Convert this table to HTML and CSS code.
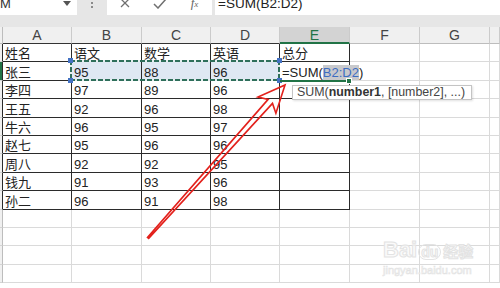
FILE: index.html
```html
<!DOCTYPE html>
<html lang="zh">
<head>
<meta charset="utf-8">
<title>Excel SUM</title>
<link rel="stylesheet" href="styles.css">
</head>
<body>
<div class="topbar">
  <div class="namebox"><span class="fn">SUM</span><span class="caret"></span></div>
  <div class="dots"><span></span><span></span></div>
  <div class="iconbox">
    <span class="slot"><svg width="10" height="10" viewBox="0 0 10 10"><path d="M1 1L9 9M9 1L1 9" stroke="#707070" stroke-width="1.3" fill="none"/></svg></span>
    <span class="slot"><svg width="14" height="11" viewBox="0 0 14 11"><path d="M1 6L5 10L13 1" stroke="#707070" stroke-width="1.5" fill="none"/></svg></span>
    <span class="slot"><span class="fx">f<span class="x">x</span></span></span>
  </div>
  <div class="formula">=SUM(B2:D2)</div>
</div>

<div class="sheet">
  <div class="corner"></div>
  <div class="ch k">A</div><div class="ch k">B</div><div class="ch k">C</div><div class="ch k">D</div><div class="ch k on">E</div><div class="ch">F</div><div class="ch">G</div><div class="ch"></div>

  <div class="rh k"></div>
  <div class="c k">姓名</div><div class="c k">语文</div><div class="c k">数学</div><div class="c k">英语</div><div class="c k">总分</div><div class="c"></div><div class="c"></div><div class="c"></div>

  <div class="rh k on"></div>
  <div class="c k">张三</div><div class="c k sel first">95<div class="marq"><span class="h tl"></span><span class="h tr"></span><span class="h bl"></span><span class="h br"></span></div></div><div class="c k sel">88</div><div class="c k sel">96</div><div class="c k act">=SUM(<span class="ref">B2:D2</span>)</div><div class="c"></div><div class="c"></div><div class="c"></div>

  <div class="rh k"></div>
  <div class="c k">李四</div><div class="c k">97</div><div class="c k">89</div><div class="c k">96</div><div class="c k"></div><div class="c"></div><div class="c"></div><div class="c"></div>

  <div class="rh k"></div>
  <div class="c k">王五</div><div class="c k">92</div><div class="c k">96</div><div class="c k">98</div><div class="c k"></div><div class="c"></div><div class="c"></div><div class="c"></div>

  <div class="rh k"></div>
  <div class="c k">牛六</div><div class="c k">96</div><div class="c k">95</div><div class="c k">97</div><div class="c k"></div><div class="c"></div><div class="c"></div><div class="c"></div>

  <div class="rh k"></div>
  <div class="c k">赵七</div><div class="c k">95</div><div class="c k">96</div><div class="c k">96</div><div class="c k"></div><div class="c"></div><div class="c"></div><div class="c"></div>

  <div class="rh k"></div>
  <div class="c k">周八</div><div class="c k">92</div><div class="c k">92</div><div class="c k">95</div><div class="c k"></div><div class="c"></div><div class="c"></div><div class="c"></div>

  <div class="rh k"></div>
  <div class="c k">钱九</div><div class="c k">91</div><div class="c k">93</div><div class="c k">96</div><div class="c k"></div><div class="c"></div><div class="c"></div><div class="c"></div>

  <div class="rh k"></div>
  <div class="c k">孙二</div><div class="c k">96</div><div class="c k">91</div><div class="c k">98</div><div class="c k"></div><div class="c"></div><div class="c"></div><div class="c"></div>

  <div class="rh"></div>
  <div class="c"></div><div class="c"></div><div class="c"></div><div class="c"></div><div class="c"></div><div class="c"></div><div class="c"></div><div class="c"></div>
  <div class="rh"></div>
  <div class="c"></div><div class="c"></div><div class="c"></div><div class="c"></div><div class="c"></div><div class="c"></div><div class="c"></div><div class="c"></div>
  <div class="rh"></div>
  <div class="c"></div><div class="c"></div><div class="c"></div><div class="c"></div><div class="c"></div><div class="c"></div><div class="c"></div><div class="c"></div>
  <div class="rh"></div>
  <div class="c"></div><div class="c"></div><div class="c"></div><div class="c"></div><div class="c"></div><div class="c"></div><div class="c"></div><div class="c"></div>
</div>

<div class="tip">SUM(<b>number1</b>, [number2], ...)</div>

<svg class="arrow" width="500" height="288" viewBox="0 0 500 288">
  <polygon points="285,85 275.9,113.2 272.5,103.4 148.7,238.4 147.5,237.4 268.1,99.4 258,97.1" fill="none" stroke="#e3211c" stroke-width="1.6" stroke-linejoin="miter"/>
</svg>

<div class="watermark">
  <div class="wm-logo"><span class="wm-bai">Bai</span><span class="wm-du">du</span><span class="wm-jy">经验</span></div>
  <div class="wm-url">jingyan.baidu.com</div>
</div>
</body>
</html>
```

FILE: styles.css
```css
html, body {
  margin: 0;
  height: 100%;
  overflow: hidden;
  background: #fff;
}
body {
  position: relative;
  font-family: "Liberation Sans", "Noto Sans CJK SC", sans-serif;
}

/* formula bar */
.topbar {
  display: flex;
  align-items: flex-start;
  height: 36px;
  margin-top: -9px;
  background: #e6e6e6;
}
.namebox {
  width: 77px;
  height: 24px;
  background: #fff;
  display: flex;
  align-items: center;
  justify-content: space-between;
  overflow: hidden;
}
.fn {
  margin-left: -18px;
  font-size: 13px;
  color: #333;
}
.caret {
  width: 0;
  height: 0;
  border-left: 4px solid transparent;
  border-right: 4px solid transparent;
  border-top: 5px solid #555;
  margin-right: 6px;
}
.dots {
  width: 30px;
  display: flex;
  flex-direction: column;
  align-items: center;
  gap: 2px;
  padding-top: 11px;
}
.dots span {
  width: 2px;
  height: 2px;
  background: #8a8a8a;
}
.iconbox {
  width: 105px;
  height: 24px;
  background: #fff;
  display: flex;
  align-items: center;
}
.slot {
  width: 35px;
  display: flex;
  justify-content: center;
  align-items: center;
}
.fx {
  font-family: "Liberation Serif", serif;
  font-style: italic;
  font-size: 13px;
  color: #666;
}
.fx .x {
  font-size: 9px;
}
.formula {
  flex: 1;
  height: 24px;
  margin-left: 3px;
  background: #fff;
  display: flex;
  align-items: center;
  padding-left: 3px;
  font-size: 13.5px;
  color: #222;
}

/* grid */
.sheet {
  display: grid;
  grid-template-columns: 3px 69px 70px 69px 69px 70px 70px 70px 1fr;
  grid-template-rows: 17px repeat(13, 18.4px);
}
.sheet > div {
  box-sizing: border-box;
  min-width: 0;
}
.corner {
  background: #f0f0f0;
  border-right: 1px solid #bdbdbd;
  border-bottom: 1px solid #bdbdbd;
}
.ch {
  background: #f0f0f0;
  border-right: 1px solid #cbcbcb;
  border-bottom: 1px solid #bdbdbd;
  display: flex;
  align-items: center;
  justify-content: center;
  font-size: 14px;
  color: #444;
}
.ch.k {
  border-bottom-color: #333;
}
.ch.on {
  background: #d3d3d3;
  color: #217346;
  border-bottom: 2px solid #217346;
}
.rh {
  background: #f0f0f0;
  border-right: 1px solid #bdbdbd;
  border-bottom: 1px solid #d4d4d4;
}
.rh.k {
  border-right-color: #2b2b2b;
}
.rh.on {
  background: #217346;
}
.c {
  border-right: 1px solid #dadada;
  border-bottom: 1px solid #dadada;
  padding: 0 2px;
  display: flex;
  align-items: flex-end;
  font-size: 13px;
  line-height: 15px;
  color: #222;
  white-space: nowrap;
}
.c.k {
  border-right-color: #2b2b2b;
  border-bottom-color: #2b2b2b;
}
.c.sel {
  background: #dfe8f3;
}
.c.first {
  position: relative;
  z-index: 1;
}
.c.act {
  position: relative;
  z-index: 2;
  border-bottom-color: #217346;
  box-shadow: 0 1px 0 #217346;
}
.c.act::after {
  content: "";
  position: absolute;
  right: -3px;
  bottom: -4px;
  width: 4px;
  height: 4px;
  background: #217346;
  border: 1px solid #fff;
}
.ref {
  background: #c8c9cc;
  color: #3d6dc2;
}

/* referenced range marquee (overlay spanning B2:D2) */
.marq {
  position: absolute;
  left: -2px;
  top: -2px;
  width: 210px;
  height: calc(100% + 3px);
  pointer-events: none;
  background:
    repeating-linear-gradient(90deg, #2f6f5b 0 5px, #e6eef0 5px 7px) 0 0 / 100% 2px no-repeat,
    repeating-linear-gradient(90deg, #2f6f5b 0 5px, #e6eef0 5px 7px) 0 100% / 100% 2px no-repeat,
    repeating-linear-gradient(180deg, #2f6f5b 0 5px, #e6eef0 5px 7px) 0 0 / 2px 100% no-repeat,
    repeating-linear-gradient(180deg, #2f6f5b 0 5px, #e6eef0 5px 7px) 100% 0 / 2px 100% no-repeat;
}
.h {
  position: absolute;
  width: 5px;
  height: 5px;
  background: #4472c4;
}
.tl { left: -2px; top: -2px; }
.tr { right: -2px; top: -2px; }
.bl { left: -2px; bottom: -2px; }
.br { right: -2px; bottom: -2px; }

/* tooltip */
.tip {
  position: absolute;
  left: 292px;
  top: 85px;
  height: 15px;
  box-sizing: border-box;
  padding: 0 6px 0 4px;
  border: 1px solid #c4c4c4;
  background: #fff;
  box-shadow: 1px 1px 2px rgba(0, 0, 0, 0.12);
  font-size: 12.4px;
  line-height: 13px;
  color: #444;
  white-space: nowrap;
  z-index: 3;
}
.tip b {
  color: #333;
}

/* annotation arrow */
.arrow {
  position: absolute;
  left: 0;
  top: 0;
  pointer-events: none;
  z-index: 4;
}

/* watermark */
.watermark {
  position: absolute;
  left: 383px;
  top: 238px;
  z-index: 4;
  color: #fafafa;
  -webkit-text-stroke: 1px #e3e3e3;
}
.wm-logo {
  display: flex;
  align-items: baseline;
  font-family: "Liberation Sans", sans-serif;
  font-weight: bold;
  line-height: 24px;
}
.wm-bai {
  font-size: 22px;
}
.wm-du {
  font-size: 14px;
  margin: 0 2px 0 1px;
  padding: 0 2px;
  border-radius: 8px;
  border: 1px solid #e3e3e3;
  line-height: 14px;
}
.wm-jy {
  font-size: 15px;
  font-family: "Noto Sans CJK SC", sans-serif;
}
.wm-url {
  font-size: 11px;
  line-height: 14px;
  -webkit-text-stroke: 0.6px #e3e3e3;
}
```
